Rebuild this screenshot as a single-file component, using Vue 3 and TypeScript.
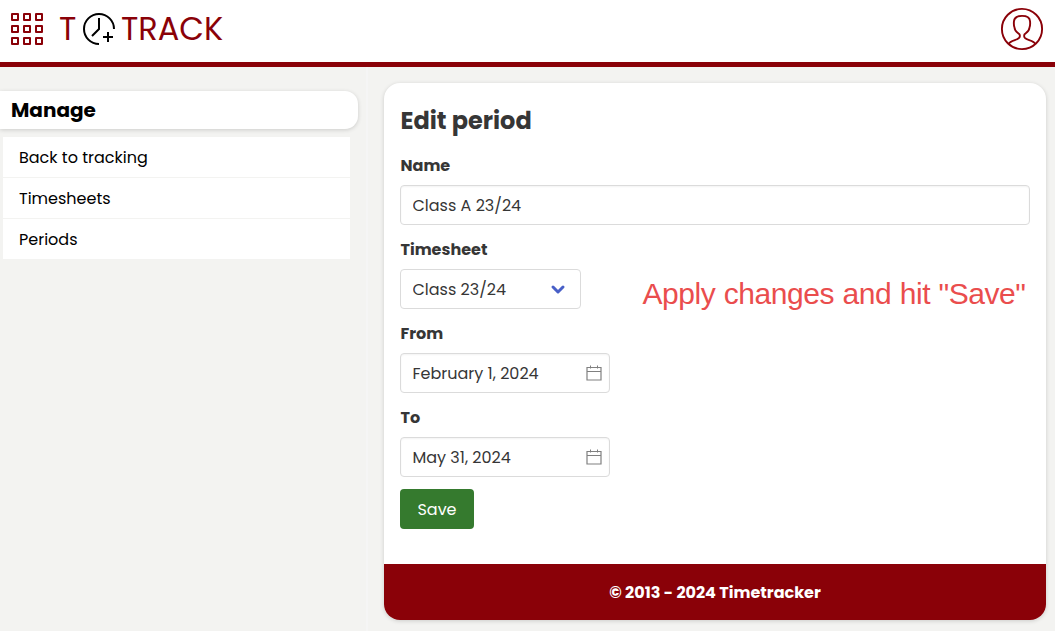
<script setup lang="ts">
import { ref } from 'vue'

interface MenuItem {
  label: string
  key: string
}

const menu: MenuItem[] = [
  { label: 'Back to tracking', key: 'back' },
  { label: 'Timesheets', key: 'timesheets' },
  { label: 'Periods', key: 'periods' },
]
const squares: number[] = [0, 1, 2, 3, 4, 5, 6, 7, 8]

const name = ref('Class A 23/24')
const timesheet = ref('Class 23/24')
const from = ref('February 1, 2024')
const to = ref('May 31, 2024')
</script>

<template>
  <div class="page">
    <header class="topbar">
      <div class="apps">
        <span v-for="s in squares" :key="s" class="square"></span>
      </div>
      <div class="brand">
        <span class="brand-t">T</span>
        <svg class="clock" width="34" height="34" viewBox="0 0 34 34" fill="none" stroke="#000" stroke-width="2">
          <path d="M17 32A15 15 0 1 1 32 17" />
          <path d="M17 6V17L10 24" />
          <path d="M26 20V30M21 25H31" />
        </svg>
        <span class="brand-track">TRACK</span>
      </div>
      <svg class="avatar" width="44" height="44" viewBox="0 0 44 44" fill="none" stroke="#8a0108" stroke-width="1.9">
        <circle cx="22" cy="22" r="20.1" />
        <path d="M8.600 37C10.500 32.500 19.600 33.500 19.800 29.500V28C19.800 26.300 14.800 25.500 14.500 20.500C13.500 18 13.800 16 14 14C14.300 10.500 17 8.900 22 8.900C27 8.900 29.700 10.500 30 14C30.200 16 30.500 18 29.500 20.500C29.200 25.500 24.200 26.300 24.200 28V29.500C24.400 33.500 33.500 32.500 35.400 37" />
      </svg>
    </header>
    <div class="body">
      <nav class="side">
        <h2 class="side-title"><span>Manage</span></h2>
        <ul class="menu">
          <li v-for="m in menu" :key="m.key"><a>{{ m.label }}</a></li>
        </ul>
      </nav>
      <main class="card">
        <form class="form" @submit.prevent>
          <h1>Edit period</h1>
          <label>Name</label>
          <input v-model="name" class="field" type="text" />
          <label>Timesheet</label>
          <div class="row">
            <div class="picker">
              <select v-model="timesheet" class="field sheet"><option>Class 23/24</option></select>
              <svg class="chevron" width="16" height="12" viewBox="0 0 16 12" fill="none" stroke="#485fc7" stroke-width="3" stroke-linecap="round" stroke-linejoin="round"><path d="M3 4L8 9L13 4" /></svg>
            </div>
            <p class="note">Apply changes and hit "Save"</p>
          </div>
          <label>From</label>
          <div class="date">
            <input v-model="from" class="field" type="text" />
            <svg class="cal" width="16" height="16" viewBox="0 0 16 16" fill="none" stroke="#808080"><path d="M1 2.500H15V15H1ZM1 6.500H15" stroke-width="1.2" /><path d="M4.500 .5V3.500M11.500 .5V3.500" /></svg>
          </div>
          <label>To</label>
          <div class="date">
            <input v-model="to" class="field" type="text" />
            <svg class="cal" width="16" height="16" viewBox="0 0 16 16" fill="none" stroke="#808080"><path d="M1 2.500H15V15H1ZM1 6.500H15" stroke-width="1.2" /><path d="M4.500 .5V3.500M11.500 .5V3.500" /></svg>
          </div>
          <button class="save" type="submit">Save</button>
        </form>
        <footer class="foot"><span>© 2013 - 2024 Timetracker</span></footer>
      </main>
    </div>
  </div>
</template>

<style>
body { background: #f3f3f1; overflow: hidden; }
</style>

<style scoped>
.page, .page * { box-sizing: border-box; }
.page {
  height: 631px;
  font: 16px/24px Poppins, Inter, sans-serif;
  color: #363636;
  background: #f3f3f1;
  overflow: hidden;
}
.page span, .page a, .note { white-space: nowrap; }
.topbar {
  display: flex;
  align-items: flex-start;
  height: 67px;
  background: #fff;
  border-bottom: 5px solid #8a0108;
}
.apps { display: grid; grid-template-columns: repeat(3, 8px); gap: 4px; margin: 13px 0 0 11px; }
.square { height: 8px; border: 2px solid #8a0108; border-radius: 1px; }
.brand { display: flex; align-items: flex-start; flex: 1; color: #8a0108; font-size: 32px; line-height: 58px; margin-left: 16px; }
.brand-t { width: 23px; }
.clock { margin-top: 12px; width: 34px; flex: none; }
.brand-track { margin-left: 5px; }
.avatar { margin: 7px 11px 0 0; }
.body { display: flex; align-items: flex-start; }
.side { width: 368px; height: 564px; padding-top: 24px; border-right: 2px solid #f5f5f5; flex: none; }
.side-title {
  margin: 0;
  width: 358px;
  height: 38px;
  padding-left: 11px;
  font-size: 20px;
  font-weight: 700;
  line-height: 38px;
  color: #000;
  background: #fff;
  border-radius: 0 13px 13px 0;
  box-shadow: 0 1px 4px rgba(0, 0, 0, .16);
}
.menu { list-style: none; margin: 8px 0 0 3px; padding: 0; width: 347px; }
.menu li { height: 41px; padding-left: 16px; line-height: 41px; background: #fff; border-bottom: 1px solid #f3f3f1; color: #000; }
.card { width: 662px; height: 537px; margin: 16px 0 0 16px; border-radius: 16px; background: #fff; box-shadow: 0 1px 4px rgba(0, 0, 0, .16); overflow: hidden; }
.form { height: 481px; padding: 20px 16px 0; display: flex; flex-direction: column; align-items: flex-start; }
h1 { margin: 0 0 6px .5px; font-size: 24px; font-weight: 700; line-height: 36px; }
label { font-weight: 700; line-height: 26px; margin: 8px 0 8px .5px; height: 24px; }
.field {
  display: block;
  width: 100%;
  height: 40px;
  padding: 0 11.5px;
  font: inherit;
  color: #363636;
  background: #fff;
  border: 1px solid #dbdbdb;
  border-radius: 4px;
  outline: none;
  appearance: none;
  box-shadow: inset 0 1px 2px rgba(10, 10, 10, .05);
}
.field + label, .row + label, .date + label { margin-top: 12px; }
.row { display: flex; width: 100%; align-items: center; height: 40px; }
.picker { position: relative; width: 181px; flex: none; }
.sheet { box-shadow: none; padding-top: 1px; }
.chevron { position: absolute; right: 15px; top: 14px; }
.date { position: relative; width: 210px; }
.cal { position: absolute; right: 8px; top: 12px; }
.note { margin: 9px 0 0 61.5px; font: 30px/36px "Liberation Sans", Arial, sans-serif; letter-spacing: -.45px; word-spacing: .6px; color: #ea4d4d; }
.save { width: 74px; height: 40px; margin-top: 12px; padding: 1px 0 0; border: 0; border-radius: 4px; font: inherit; color: #fff; background: #357a2e; }
.foot { display: flex; align-items: center; justify-content: center; height: 56px; padding-top: 1px; color: #fff; background: #8a0108; font-weight: 700; }
</style>
